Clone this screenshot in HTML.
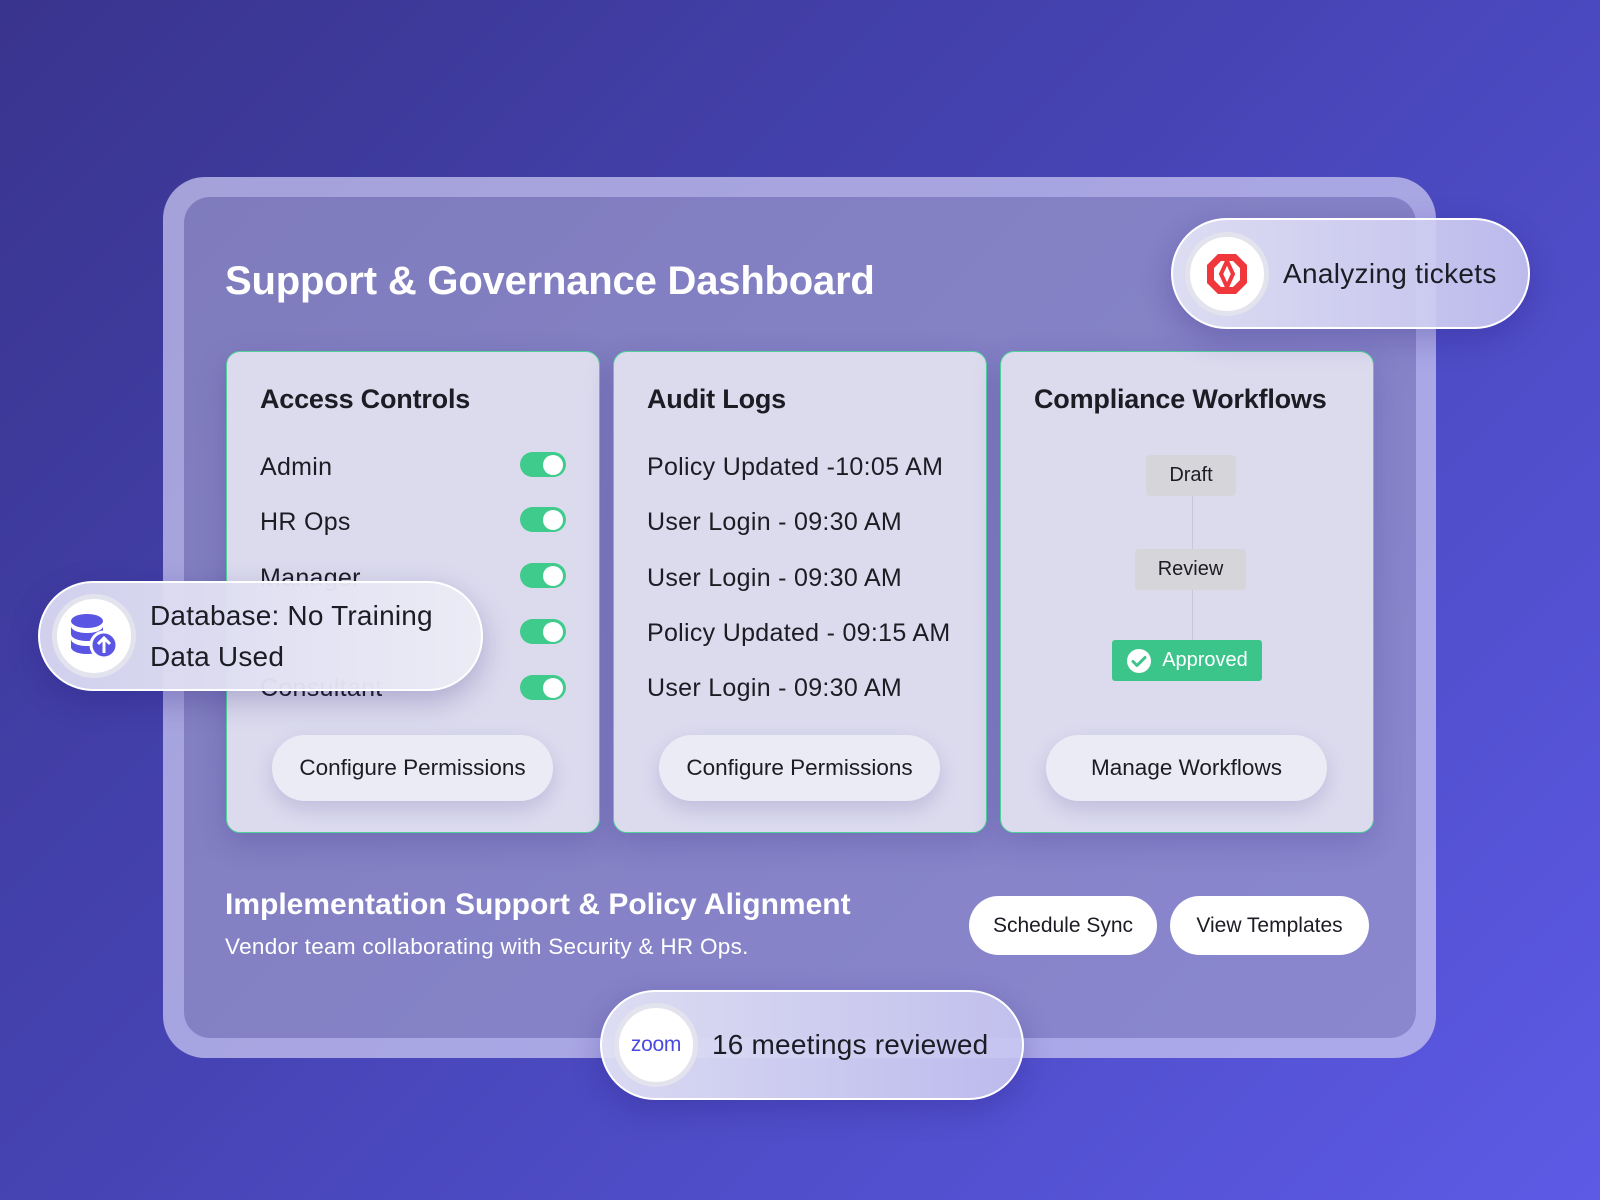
<!DOCTYPE html>
<html><head><meta charset="utf-8"><style>
*{box-sizing:border-box;margin:0;padding:0}
body{width:1600px;height:1200px;overflow:hidden;font-family:"Liberation Sans",sans-serif;background:linear-gradient(135deg,#39348d 0%,#4644b4 45%,#5d5ae6 100%);position:relative}
.abs{position:absolute}
.frame{left:163px;top:177px;width:1273px;height:881px;border-radius:42px;background:rgba(200,198,240,0.75)}
.panel{left:184px;top:197px;width:1232px;height:841px;border-radius:26px;background:linear-gradient(135deg,#7f7cbd,#8a87cf)}
.title{left:225px;top:259px;font-size:40px;font-weight:bold;color:#fff;letter-spacing:-0.2px}
.card{top:351px;width:374px;height:482px;border-radius:14px;background:#dcdbee;border:1.5px solid #4fd19a;box-shadow:0 10px 30px rgba(40,30,120,0.2)}
.ct{position:absolute;left:33px;top:32px;font-size:27px;font-weight:bold;color:#1c1c24;letter-spacing:-0.2px}
.row{position:absolute;left:33px;font-size:25px;color:#1c1c24;letter-spacing:0.3px}
.tg{position:absolute;left:293px;width:46px;height:25px;border-radius:13px;background:#3fcb8c}
.tg::after{content:"";position:absolute;right:3px;top:2.5px;width:20px;height:20px;border-radius:50%;background:#fff}
.btn{position:absolute;top:383px;width:281px;height:66px;border-radius:33px;background:#ebebf6;box-shadow:0 8px 20px rgba(60,50,140,0.18);font-size:22.5px;color:#1c1c24;display:flex;align-items:center;justify-content:center}
.pill{border-radius:60px;background:linear-gradient(90deg,rgba(225,225,245,0.95),rgba(200,198,240,0.9));border:2px solid #fff;box-shadow:0 10px 30px rgba(30,20,110,0.25);display:flex;align-items:center}
.ic{width:84px;height:84px;border-radius:50%;background:#fff;border:5px solid #e3e3ee;display:flex;align-items:center;justify-content:center;flex:none}
.wf{position:absolute;font-size:20px;color:#1c1c24;background:#d6d6da;border-radius:4px;display:flex;align-items:center;justify-content:center}
.sp{background:#fff;border-radius:30px;font-size:21px;color:#1c1c24;display:flex;align-items:center;justify-content:center;height:59px}
</style></head><body>
<div class="abs frame"></div>
<div class="abs panel"></div>
<div class="abs title">Support &amp; Governance Dashboard</div>

<div class="abs card" style="left:226px">
  <div class="ct">Access Controls</div>
  <div class="row" style="top:101px">Admin</div>
  <div class="row" style="top:156px">HR Ops</div>
  <div class="row" style="top:212px">Manager</div>
  <div class="row" style="top:322px">Consultant</div>
  <div class="tg" style="top:100px"></div>
  <div class="tg" style="top:155px"></div>
  <div class="tg" style="top:211px"></div>
  <div class="tg" style="top:267px"></div>
  <div class="tg" style="top:323px"></div>
  <div class="btn" style="left:45px">Configure Permissions</div>
</div>
<div class="abs card" style="left:613px">
  <div class="ct">Audit Logs</div>
  <div class="row" style="top:101px">Policy Updated -10:05 AM</div>
  <div class="row" style="top:156px">User Login - 09:30 AM</div>
  <div class="row" style="top:212px">User Login - 09:30 AM</div>
  <div class="row" style="top:267px">Policy Updated - 09:15 AM</div>
  <div class="row" style="top:322px">User Login - 09:30 AM</div>
  <div class="btn" style="left:45px">Configure Permissions</div>
</div>
<div class="abs card" style="left:1000px">
  <div class="ct">Compliance Workflows</div>
  <div style="position:absolute;left:191px;top:143px;width:1px;height:150px;background:#c8c8d4"></div>
  <div class="wf" style="left:145px;top:103px;width:90px;height:41px">Draft</div>
  <div class="wf" style="left:134px;top:197px;width:111px;height:41px">Review</div>
  <div class="wf" style="left:111px;top:288px;width:150px;height:41px;background:#3cc58a;color:#fff;border-radius:3px">
    <svg width="26" height="26" viewBox="0 0 26 26" style="margin-right:10px"><circle cx="13" cy="13" r="12" fill="#fff"/><path d="M7 13.5l4 4 8-8" stroke="#3cc58a" stroke-width="3" fill="none" stroke-linecap="round" stroke-linejoin="round"/></svg>Approved</div>
  <div class="btn" style="left:45px">Manage Workflows</div>
</div>

<div class="abs" style="left:225px;top:888px;font-size:30px;font-weight:bold;color:#fff">Implementation Support &amp; Policy Alignment</div>
<div class="abs" style="left:225px;top:934px;font-size:22.5px;color:#fff;letter-spacing:0.3px">Vendor team collaborating with Security &amp; HR Ops.</div>
<div class="abs sp" style="left:969px;top:896px;width:188px">Schedule Sync</div>
<div class="abs sp" style="left:1170px;top:896px;width:199px">View Templates</div>

<div class="abs pill" style="left:1171px;top:218px;width:359px;height:111px;padding-left:12px">
  <div class="ic"><svg width="46" height="46" viewBox="0 0 46 46"><path d="M14 3h9v7h-6l-7 7v12l7 7h6v7h-9L3 32V14z" fill="#f0373c"/><path d="M32 3h-9v7h6l7 7v12l-7 7h-6v7h9l11-11V14z" fill="#f0373c"/><path d="M23 10l-6 13 6 13 6-13z" fill="none" stroke="#f0373c" stroke-width="4"/></svg></div>
  <span style="margin-left:14px;font-size:28px;color:#1c1c24;letter-spacing:0.3px">Analyzing tickets</span>
</div>

<div class="abs pill" style="left:38px;top:581px;width:445px;height:110px;padding-left:12px;background:linear-gradient(90deg,rgba(215,214,240,0.96),rgba(236,236,246,0.97))">
  <div class="ic"><svg width="50" height="46" viewBox="0 0 50 46"><ellipse cx="18" cy="8" rx="16" ry="7" fill="#5b55e3"/><path d="M2 13c0 4 7 7 16 7s16-3 16-7v8c0 4-7 7-16 7S2 25 2 21z" fill="#5b55e3"/><path d="M2 26c0 4 7 7 16 7s16-3 16-7v8c0 4-7 7-16 7S2 38 2 34z" fill="#5b55e3"/><circle cx="35" cy="32" r="13" fill="#5b55e3" stroke="#fff" stroke-width="3"/><path d="M35 40V25M29 31l6-6 6 6" stroke="#fff" stroke-width="3" fill="none"/></svg></div>
  <div style="margin-left:14px;font-size:28px;line-height:41px;color:#1c1c24;letter-spacing:0.2px">Database: No Training<br>Data Used</div>
</div>

<div class="abs pill" style="left:600px;top:990px;width:424px;height:110px;padding-left:12px">
  <div class="ic"><span style="color:#4a4ae0;font-size:21px;letter-spacing:-0.3px">zoom</span></div>
  <span style="margin-left:14px;font-size:28px;color:#1c1c24;letter-spacing:0.2px">16 meetings reviewed</span>
</div>
</body></html>
